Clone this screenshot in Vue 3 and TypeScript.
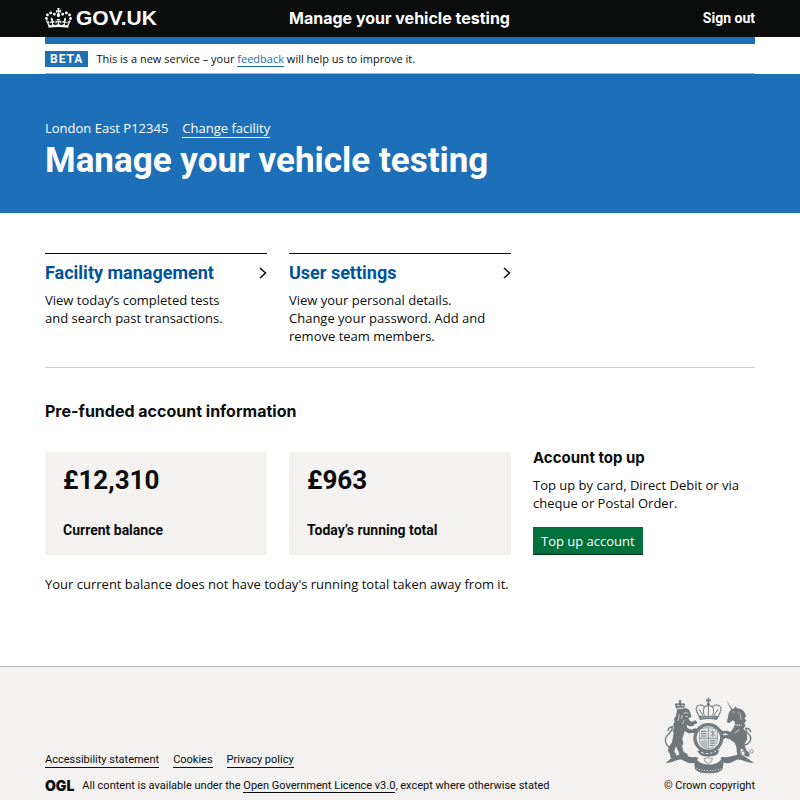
<script setup lang="ts">
interface ServiceCard {
  title: string
  text: string
  href: string
}

interface Balance {
  amount: string
  label: string
}

const cards: ServiceCard[] = [
  {
    title: 'Facility management',
    text: 'View today’s completed tests and search past transactions.',
    href: '#facility',
  },
  {
    title: 'User settings',
    text: 'View your personal details. Change your password. Add and remove team members.',
    href: '#settings',
  },
]

const balances: Balance[] = [
  { amount: '£12,310', label: 'Current balance' },
  { amount: '£963', label: 'Today’s running total' },
]

const footerLinks: string[] = ['Accessibility statement', 'Cookies', 'Privacy policy']
</script>

<template>
  <div class="page">
    <header class="header">
      <div class="container columns header-row">
        <a class="logo" href="#home">
          <svg class="crown" viewBox="0 0 132 97" aria-hidden="true">
            <path
              fill="currentColor"
              d="M25 30.2c3.5 1.5 7.7-.2 9.1-3.7 1.5-3.6-.2-7.8-3.9-9.2-3.6-1.4-7.6.3-9.1 3.9-1.4 3.5.3 7.5 3.9 9zM9 39.5c3.6 1.5 7.8-.2 9.2-3.7 1.5-3.6-.2-7.8-3.9-9.1-3.6-1.5-7.6.2-9.1 3.8-1.4 3.5.3 7.5 3.8 9zM4.4 57.2c3.5 1.5 7.7-.2 9.1-3.8 1.5-3.6-.2-7.7-3.9-9.1-3.5-1.5-7.6.3-9.1 3.8-1.4 3.5.3 7.6 3.9 9.1zm38.3-21.4c3.5 1.5 7.7-.2 9.1-3.8 1.5-3.6-.2-7.7-3.9-9.1-3.6-1.5-7.6.3-9.1 3.8-1.3 3.6.4 7.7 3.9 9.1zm64.4-5.6c-3.6 1.5-7.8-.2-9.1-3.7-1.5-3.6.2-7.8 3.8-9.2 3.6-1.4 7.7.3 9.2 3.9 1.3 3.5-.4 7.5-3.9 9zm15.9 9.3c-3.6 1.5-7.7-.2-9.1-3.7-1.5-3.6.2-7.8 3.7-9.1 3.6-1.5 7.7.2 9.2 3.8 1.5 3.5-.3 7.5-3.8 9zm4.7 17.7c-3.6 1.5-7.8-.2-9.2-3.8-1.5-3.6.2-7.7 3.9-9.1 3.6-1.5 7.7.3 9.2 3.8 1.3 3.5-.4 7.6-3.9 9.1zM89.3 35.8c-3.6 1.5-7.8-.2-9.2-3.8-1.4-3.6.2-7.7 3.9-9.1 3.6-1.5 7.7.3 9.2 3.8 1.4 3.6-.3 7.7-3.9 9.1zM69.7 17.7l8.9 4.7V9.3l-8.9 2.8c-.2-.3-.5-.6-.9-.9L72.4 0H59.6l3.5 11.2c-.3.3-.6.5-.9.9l-8.8-2.8v13.1l8.8-4.7c.3.3.6.7.9.9l-5 15.4v.1c-.2.8-.4 1.6-.4 2.4 0 4.1 3.1 7.5 7 8.1h.2c.3 0 .7.1 1 .1.4 0 .7 0 1-.1h.2c4-.6 7.1-4.1 7.1-8.1 0-.8-.1-1.7-.4-2.4V34l-5.1-15.4c.4-.2.7-.6 1-.9zM66 92.8c16.9 0 32.8 1.1 47.1 3.2 4-16.9 8.9-26.7 14-33.5l-9.6-3.4c1 4.9 1.1 7.2 0 10.2-1.5-1.4-3-4.3-4.2-8.7L108.6 76c2.8-2 5-3.2 7.5-3.3-4.4 9.4-10 11.9-13.6 11.2-4.3-.8-6.3-4.6-5.6-7.9 1-4.7 5.7-5.9 8-.5 4.3-8.7-3-11.4-7.6-8.8 7.1-7.2 7.9-13.5 2.1-21.1-8 6.1-8.1 12.3-4.5 20.8-4.7-5.4-12.1-2.5-9.5 6.2 3.4-5.2 7.9-2 7.2 3.1-.6 4.3-6.4 7.8-13.5 7.2-10.3-.9-10.9-8-11.2-13.8 2.5-.5 7.1 1.8 11 7.3L80.2 60c-4.1 4.4-8 5.3-12.3 5.4 1.4-4.4 8-11.6 8-11.6H55.5s6.4 7.2 7.9 11.6c-4.2-.1-8-1-12.3-5.4l1.4 16.4c3.9-5.5 8.5-7.7 10.9-7.3-.3 5.8-.9 12.8-11.1 13.8-7.2.6-12.9-2.9-13.5-7.2-.7-5 3.8-8.3 7.1-3.1 2.7-8.7-4.6-11.6-9.4-6.2 3.7-8.5 3.6-14.7-4.6-20.8-5.8 7.6-5 13.9 2.2 21.1-4.7-2.6-11.9.1-7.7 8.8 2.3-5.5 7.1-4.2 8.1.5.7 3.3-1.3 7.1-5.7 7.9-3.5.7-9-1.8-13.5-11.2 2.5.1 4.7 1.3 7.5 3.3l-4.7-15.4c-1.2 4.4-2.7 7.2-4.3 8.7-1.1-3-.9-5.3 0-10.2l-9.5 3.4c5 6.9 9.9 16.7 14 33.5 14.8-2.1 30.8-3.2 47.7-3.2z"
            />
          </svg>
          <span>GOV.UK</span>
        </a>
        <a class="service-name" href="#service">Manage your vehicle testing</a>
        <a class="sign-out" href="#sign-out">Sign out</a>
      </div>
    </header>

    <div class="container">
      <div class="phase-banner">
        <strong class="tag">BETA</strong>
        <span>This is a new service – your <a class="feedback" href="#feedback">feedback</a> will help us to improve it.</span>
      </div>
    </div>

    <section class="masthead">
      <div class="container">
        <p class="facility">
          <span>London East P12345</span>
          <a class="underlined" href="#change">Change facility</a>
        </p>
        <h1>Manage your vehicle testing</h1>
      </div>
    </section>

    <main class="container main">
      <div class="columns cards">
        <article v-for="card in cards" :key="card.title" class="card">
          <h2>
            <a :href="card.href">
              {{ card.title }}
              <svg class="chevron" viewBox="0 0 8 12" aria-hidden="true">
                <path d="M1 1l5.500 5L1 11" fill="none" stroke="#0b0c0c" stroke-width="1.500" />
              </svg>
            </a>
          </h2>
          <p>{{ card.text }}</p>
        </article>
      </div>

      <h2 class="section-title">Pre-funded account information</h2>
      <div class="columns account">
        <div v-for="balance in balances" :key="balance.label" class="balance">
          <strong class="amount">{{ balance.amount }}</strong>
          <span class="label">{{ balance.label }}</span>
        </div>
        <div class="top-up">
          <h3>Account top up</h3>
          <p>Top up by card, Direct Debit or via cheque or Postal Order.</p>
          <button type="button">Top up account</button>
        </div>
      </div>
      <p class="note">Your current balance does not have today's running total taken away from it.</p>
    </main>

    <footer class="footer">
      <div class="container footer-row">
        <div class="footer-meta">
          <nav class="footer-links">
            <a v-for="link in footerLinks" :key="link" class="underlined" href="#footer">{{ link }}</a>
          </nav>
          <div class="licence">
            <span class="ogl">OGL</span>
            <span>All content is available under the <a class="underlined" href="#licence">Open Government Licence v3.0</a>, except where otherwise stated</span>
          </div>
        </div>
        <a class="copyright" href="#copyright">
          <svg class="crest" viewBox="27 14 273 231" aria-hidden="true">
            <!-- motto ribbon -->
            <g fill="#6f777b">
              <path d="M32 212c12-8 20-20 36-23 20-4 36 10 54 4l8 4-8 12c-14 9-28 0-40-6-14-5-22 8-50 9z" />
              <path d="M296 212c-12-8-22-20-38-23-20-4-36 10-54 4l-8 4 8 12c14 9 28 0 40-6 14-5 24 8 52 9z" />
              <path d="M116 194l16 14c18 12 44 12 60 0l16-14-5 36c-8 10-20 13-41 13s-34-3-42-13z" />
            </g>
            <path d="M125 229c18 8 56 8 74 0" fill="none" stroke="#f3f2f1" stroke-width="3" stroke-dasharray="3 5" />
            <!-- supporters' tails -->
            <g fill="none" stroke="#6f777b" stroke-linecap="round">
              <path d="M54 168c-22-4-28-24-18-38 8-10 18-14 16-26-8 0-12 5-13 11" stroke-width="4" />
              <path d="M266 158c16-2 26-14 19-28-6-9-15-12-13-22 8-1 13 4 15 10" stroke-width="4" />
            </g>
            <!-- lion -->
            <g fill="#6f777b">
              <path d="M66 53c6-6 30-7 36-1l6 14 1 8-9 4 4 7 7 3 10-4 6 6-3 5-7 1-1 5-13 1-8-5 2 10 13 5 9-4 9 2-1 8-10 4-16 1-12-6-7 22 3 14-4 8 5 18 11 6 2 8H73l-1-12-9-19-5 14 6 12-2 9H47l-3-14-5-7 1-9 11-17 5-27-3-8 4-8-3-10 5-8-2-10 6-9z" />
              <path d="M65 51l-5-12c-1-6 5-8 10-5l3-7h-2v-3h8v3h-2l3 7c5-3 11-1 10 5l-4 12z" />
            </g>
            <path d="M66 41c2-4 6-3 8 1M79 42c2-4 6-4 7 0M67 48h18" fill="none" stroke="#f3f2f1" stroke-width="3" />
            <path d="M85 63l8-2 7 3M91 72l8 1M82 68l-3 12M88 82l-6 13M73 66l-4 20" fill="none" stroke="#f3f2f1" stroke-width="2" />
            <!-- unicorn -->
            <g fill="#6f777b">
              <path d="M214 23l21 32-4 3zM222 60l8-9 8-3 3-6 5 6c16 1 25 11 27 25l-5 5 6 7-6 7 3 9-6 8 10 12 2 18-9 17 6 18 10 11-2 8-13-2 1-11-12-13-2 13 4 11-5 10-12-5 4-11-3-22-5-12-15-10-13-4-11 7-7-3 3-7 11-6 12 1-6-6-11 3-13-8 2-7 8 1 5 4 14-1 8 5 10-14 4-16-6-6-11 9-7-3 1-8z" />
            </g>
            <circle cx="236" cy="59" r="2" fill="#f3f2f1" />
            <path d="M225 90c11 7 22 10 35 8" fill="none" stroke="#f3f2f1" stroke-width="4" stroke-dasharray="4 3" />
            <path d="M249 58c8 7 10 14 9 25M254 112l-15 10" fill="none" stroke="#f3f2f1" stroke-width="2" />
            <g fill="none" stroke="#6f777b" stroke-width="2">
              <circle cx="251" cy="177" r="5" />
              <circle cx="264" cy="183" r="6" />
              <circle cx="277" cy="184" r="6" />
              <circle cx="290" cy="177" r="5" />
            </g>
            <!-- central crown -->
            <path d="M124 52c-2-14 14-18 24-9l12-4 12 4c10-9 28-5 26 9-1 7-5 12-8 20h-58c-3-8-7-13-8-20z" fill="#f3f2f1" stroke="#6f777b" stroke-width="4" stroke-dasharray="4 1" />
            <path d="M160 40v31M148 44c-4 9-3 17 0 25M173 44c4 9 3 17 0 25M132 51l12 18M189 51l-12 18" fill="none" stroke="#6f777b" stroke-width="3" />
            <path d="M157 16h6l-2 6 6-2v8l-6-2 3 10c4 5-12 5-8 0l3-10-6 2v-8l6 2z" fill="#6f777b" />
            <path d="M130 72h61l-5 11c-17-4-34-4-51 0z" fill="#6f777b" />
            <path d="M139 77c15-3 29-3 44 0" fill="none" stroke="#f3f2f1" stroke-width="2" stroke-dasharray="4 3" />
            <!-- garter -->
            <circle cx="160" cy="137" r="40" fill="#f3f2f1" stroke="#6f777b" stroke-width="10" />
            <circle cx="160" cy="137" r="40" fill="none" stroke="#b4b8ba" stroke-width="2" stroke-dasharray="2 5" />
            <!-- quartered shield -->
            <path d="M133 112c17-8 37-8 54 0v30c0 15-11 23-27 29-16-6-27-14-27-29z" fill="#dfe1e2" stroke="#6f777b" stroke-width="2" />
            <path d="M160 107v63M133 138h54" fill="none" stroke="#6f777b" stroke-width="2" />
            <path d="M138 117h16M138 124h16M138 131h16M165 145h16M165 152h15M165 159h10" fill="none" stroke="#6f777b" stroke-width="3" />
            <path d="M166 115l15 17M181 115l-15 17M173 114v20M141 145v12M147 143v20M153 143v23" fill="none" stroke="#8d9497" stroke-width="3" />
            <!-- garter buckle and rose -->
            <path d="M127 177l9-5 24 8 26-8 7 5-9 11c-16 6-32 6-48 0z" fill="#6f777b" />
            <path d="M138 179l8 4M152 184h7M166 183l6-2M178 179l5-3" fill="none" stroke="#f3f2f1" stroke-width="3" />
            <path d="M160 192l4 7 8-1-2 9-7 3-3 10-4-10-7-3-2-9 9 1z" fill="#f3f2f1" stroke="#6f777b" stroke-width="2" />
          </svg>
          <span>© Crown copyright</span>
        </a>
      </div>
    </footer>
  </div>
</template>

<style>
body {
  margin: 0;
  background: #ffffff;
}
</style>

<style scoped>
.page {
  --heading: Roboto, "Noto Sans", sans-serif;
  --title: Inter, Roboto, sans-serif;

  display: flex;
  flex-direction: column;
  min-height: 100vh;
  color: #0b0c0c;
  font-family: "Open Sans", "Noto Sans", sans-serif;
  font-size: 13px;
  line-height: 18px;
}

.container {
  box-sizing: border-box;
  width: 100%;
  max-width: 960px;
  margin: 0 auto;
  padding: 0 45px;
}

.columns {
  display: grid;
  grid-template-columns: repeat(3, minmax(0, 1fr));
  gap: 22px;
}

h1,
h2,
h3,
p {
  margin: 0;
}

a {
  color: inherit;
  text-decoration: none;
}

.underlined {
  border-bottom: 1px solid currentColor;
}

.header {
  background: #0b0c0c;
  color: #ffffff;
  font-weight: 700;
}

.header-row {
  align-items: center;
  min-height: 37px;
  padding-bottom: 1px;
}

.logo {
  display: flex;
  align-items: center;
  gap: 4px;
  font-family: "Liberation Sans", Arial, sans-serif;
  font-size: 21px;
}

.crown {
  width: 27px;
  height: 20px;
}

.service-name {
  font-family: var(--title);
  font-size: 16px;
  white-space: nowrap;
}

.sign-out {
  justify-self: end;
  font-family: var(--heading);
  font-size: 14px;
}

.phase-banner {
  display: flex;
  align-items: center;
  gap: 8px;
  height: 29px;
  border-top: 7px solid #1d70b8;
  border-bottom: 1px solid #b1b4b6;
  font-size: 11px;
}

.tag {
  padding: 0 5px;
  background: #1d70b8;
  color: #ffffff;
  font-family: var(--heading);
  font-size: 12px;
  line-height: 16px;
  letter-spacing: 1px;
}

.feedback {
  border-bottom: 1px solid currentColor;
  color: #1d70b8;
}

.masthead {
  padding: 45px 0 31px;
  background: #1d70b8;
  color: #ffffff;
}

.facility {
  display: flex;
  align-items: baseline;
  gap: 14px;
  height: 18px;
  margin-bottom: 3px;
}

.facility .underlined {
  line-height: 17px;
}

h1 {
  font-family: var(--heading);
  font-size: 35px;
  line-height: 42px;
}

.main {
  padding-top: 40px;
  padding-bottom: 73px;
}

.cards {
  padding-bottom: 22px;
  border-bottom: 1px solid #cecece;
}

.card {
  border-top: 1px solid #0b0c0c;
}

.card h2 {
  padding: 8px 0 7px;
  font-family: var(--heading);
  font-size: 18px;
  line-height: 22px;
}

.card a {
  display: flex;
  align-items: center;
  justify-content: space-between;
  color: #00539f;
}

.card p {
  padding-right: 22px;
}

.chevron {
  width: 8px;
  height: 12px;
}

.section-title {
  padding: 32px 0 30px;
  font-family: var(--title);
  font-size: 16px;
  line-height: 22px;
}

.balance {
  display: flex;
  flex-direction: column;
  justify-content: space-between;
  box-sizing: border-box;
  min-height: 103px;
  padding: 12px 18px 16px;
  background: #f3f2f1;
  font-family: var(--heading);
}

.amount {
  font-size: 26px;
  line-height: 32px;
}

.label {
  font-size: 14px;
  font-weight: 700;
}

.top-up h3 {
  margin-bottom: 12px;
  font-family: var(--title);
  font-size: 15px;
  line-height: 12px;
}

.top-up button {
  height: 28px;
  margin-top: 15px;
  padding: 0 8px;
  border: 0;
  border-bottom: 1px solid #002d18;
  background: #00703c;
  color: #ffffff;
  font: inherit;
}

.note {
  margin-top: 20px;
}

.footer {
  flex-grow: 1;
  border-top: 1px solid #b1b4b6;
  background: #f3f2f1;
  font-family: var(--heading);
  font-size: 11px;
}

.footer-row {
  display: flex;
  align-items: flex-end;
  justify-content: space-between;
  padding-top: 30px;
  padding-bottom: 6px;
}

.footer-meta {
  display: flex;
  flex-direction: column;
  gap: 9px;
}

.footer-links {
  display: flex;
  gap: 14px;
}

.footer-links a {
  line-height: 14px;
}

.licence {
  display: flex;
  align-items: center;
  gap: 8px;
}

.ogl {
  font-family: Inter, sans-serif;
  font-size: 14px;
  font-weight: 900;
}

.copyright {
  display: flex;
  flex-direction: column;
  align-items: center;
  gap: 3px;
}

.crest {
  width: 91px;
  height: 77px;
}
</style>
